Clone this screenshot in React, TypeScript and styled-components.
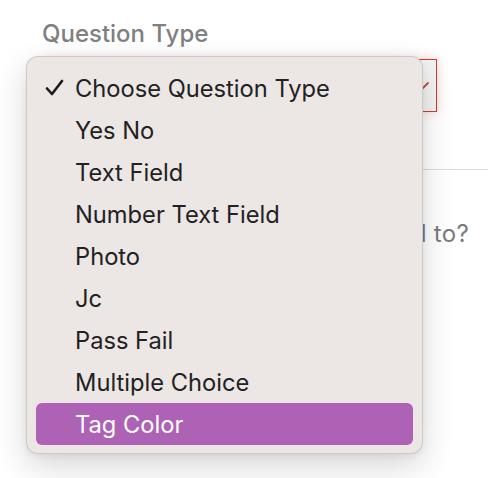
import styled, { createGlobalStyle } from "styled-components";

const GlobalStyle = createGlobalStyle`
  *, *::before, *::after {
    box-sizing: border-box;
  }
  html, body {
    margin: 0;
    padding: 0;
    background: #ffffff;
  }
  body {
    font-family: Inter, "Liberation Sans", sans-serif;
    -webkit-font-smoothing: antialiased;
  }
`;

const Page = styled.div`
  position: relative;
  width: 488px;
  height: 478px;
  overflow: hidden;
`;

const Form = styled.div`
  display: flex;
  flex-direction: column;
  padding: 20px 0 0 42px;
`;

const Label = styled.div`
  font-size: 24px;
  font-weight: 500;
  color: #808080;
  line-height: 28px;
  white-space: nowrap;
`;

const SelectBox = styled.div`
  display: flex;
  justify-content: flex-end;
  align-items: center;
  margin-top: 11px;
  width: 395px;
  height: 53px;
  padding-right: 6px;
  border: 1px solid #d23b30;
  background: #f3f3f3;
  box-shadow: 0 0 10px rgba(220, 70, 60, 0.25);
`;

const Divider = styled.div`
  margin-top: 57px;
  height: 1px;
  background: #dcdcdc;
`;

const SecondLabel = styled(Label)`
  width: 427px;
  margin-top: 50px;
  text-align: right;
  font-weight: 400;
  font-size: 24px;
  letter-spacing: 0.3px;
  color: #7a7a7a;
`;

const Menu = styled.ul`
  position: absolute;
  left: 26px;
  top: 56px;
  width: 397px;
  display: flex;
  flex-direction: column;
  margin: 0;
  padding: 10px 9px 8px;
  list-style: none;
  background: #ece7e5;
  border: 1px solid rgba(0, 0, 0, 0.13);
  border-radius: 12px;
  box-shadow: 0 12px 32px rgba(0, 0, 0, 0.16), 0 2px 6px rgba(0, 0, 0, 0.06);
`;

const Item = styled.li<{ $active?: boolean }>`
  height: 42px;
  display: flex;
  align-items: center;
  padding-left: 9px;
  border-radius: 6px;
  font-size: 23.7px;
  color: ${(p) => (p.$active ? "#ffffff" : "#222222")};
  background: ${(p) => (p.$active ? "#ae62b6" : "transparent")};
  white-space: nowrap;
`;

const CheckSlot = styled.span`
  display: flex;
  align-items: center;
  width: 30px;
  height: 100%;
  padding-bottom: 1px;
`;

const options = [
  "Choose Question Type",
  "Yes No",
  "Text Field",
  "Number Text Field",
  "Photo",
  "Jc",
  "Pass Fail",
  "Multiple Choice",
  "Tag Color",
];

export default function App() {
  return (
    <Page>
      <GlobalStyle />
      <Form>
        <Label>Question Type</Label>
        <SelectBox>
          <svg width="10" height="10" viewBox="0 0 10 10">
            <path d="M2 8 L8 2" stroke="#b5524b" strokeWidth="1.8" strokeLinecap="round" />
          </svg>
        </SelectBox>
        <Divider />
        <SecondLabel>What should this be equal to?</SecondLabel>
      </Form>
      <Menu>
        {options.map((o, i) => (
          <Item key={o} $active={o === "Tag Color"}>
            <CheckSlot>
              {i === 0 && (
                <svg width="19" height="17" viewBox="0 0 19 17">
                  <path
                    d="M2 9.5 L7 15 L17 2"
                    fill="none"
                    stroke="#1a1a1a"
                    strokeWidth="2.6"
                    strokeLinecap="round"
                    strokeLinejoin="round"
                  />
                </svg>
              )}
            </CheckSlot>
            {o}
          </Item>
        ))}
      </Menu>
    </Page>
  );
}
